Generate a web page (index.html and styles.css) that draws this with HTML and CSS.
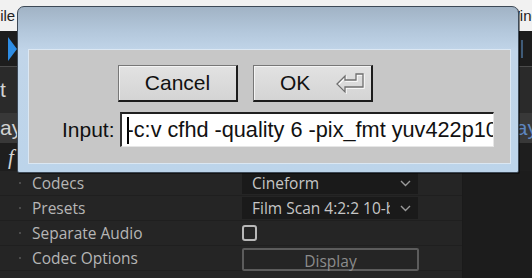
FILE: index.html
```html
<!DOCTYPE html>
<html lang="en">
<head>
  <meta charset="UTF-8" />
  <title>Input</title>
  <link rel="stylesheet" href="styles.css">
</head>
<body>
  <div class="menubar">
    <span class="menu-file">File</span>
    <span class="menu-window">Window</span>
  </div>

  <div class="toolbar">
    <svg class="play" width="9" height="24" viewBox="0 0 9 24"><polygon points="0,0 9,12 0,24" fill="#2e8de4"/></svg>
    <span class="edge-mark"></span>
  </div>
  <div class="layer-row row-b"><span class="peek">t</span></div>
  <div class="layer-row row-c"><span class="peek">ay</span><span class="peek peek-blue">ay</span></div>
  <div class="layer-row row-d"><span class="peek peek-fx">f</span></div>

  <div class="settings">
    <div class="settings-main">
      <div class="setting">
        <span class="dot"></span>
        <span class="label">Codecs</span>
        <div class="select">
          <span class="select-text">Cineform</span>
          <svg class="chevron" width="11" height="7" viewBox="0 0 11 7"><polyline points="1,1 5.5,5.5 10,1" fill="none" stroke="#9a9a9a" stroke-width="1.4"/></svg>
        </div>
      </div>
      <div class="setting">
        <span class="dot"></span>
        <span class="label">Presets</span>
        <div class="select">
          <span class="select-text">Film Scan 4:2:2 10-bit</span>
          <svg class="chevron" width="11" height="7" viewBox="0 0 11 7"><polyline points="1,1 5.5,5.5 10,1" fill="none" stroke="#9a9a9a" stroke-width="1.4"/></svg>
        </div>
      </div>
      <div class="setting">
        <span class="dot"></span>
        <span class="label">Separate Audio</span>
        <span class="checkbox"></span>
      </div>
      <div class="setting">
        <span class="dot"></span>
        <span class="label">Codec Options</span>
        <button class="display-btn">Display</button>
      </div>
    </div>
    <div class="settings-side"></div>
  </div>

  <div class="dialog">
    <div class="dialog-body">
      <div class="buttons">
        <button class="btn">Cancel</button>
        <button class="btn btn-ok">
          <span>OK</span>
          <svg class="enter" width="31" height="21" viewBox="0 0 31 21">
            <polygon points="3,11 11,3 11,7 22,7 22,1 29,1 29,14 11,14 11,19" fill="none" stroke="#ffffff" stroke-width="1.3" transform="translate(1,1)"/>
            <polygon points="3,11 11,3 11,7 22,7 22,1 29,1 29,14 11,14 11,19" fill="none" stroke="#6f6f6f" stroke-width="1.3"/>
          </svg>
        </button>
      </div>
      <div class="input-row">
        <span class="input-label">Input:</span>
        <div class="input"><span class="caret"></span>-c:v cfhd -quality 6 -pix_fmt yuv422p10</div>
      </div>
    </div>
  </div>
</body>
</html>
```

FILE: styles.css
```css
* {
  box-sizing: border-box;
  margin: 0;
  padding: 0;
}

body {
  width: 532px;
  height: 278px;
  overflow: hidden;
  position: relative;
  background: #252525;
  font-family: 'Open Sans', sans-serif;
}

/* host app behind the dialog */
.menubar {
  height: 31px;
  background: #f1f1f1;
  display: flex;
  align-items: center;
  justify-content: space-between;
  font-family: 'Liberation Sans', sans-serif;
  font-size: 15px;
  color: #222;
  overflow: hidden;
}

.menu-file {
  margin-left: -9px;
}

.menu-window {
  margin-right: -27px;
}

.toolbar {
  height: 36px;
  background: #1d1d1d;
  border-bottom: 1px solid #4b4b4b;
  display: flex;
  align-items: center;
  justify-content: space-between;
  padding-left: 8px;
}

.edge-mark {
  width: 2px;
  height: 18px;
  margin-right: 9px;
  background: #3f5b78;
}

.layer-row {
  display: flex;
  align-items: center;
  justify-content: space-between;
  overflow: hidden;
  font-family: 'Liberation Sans', sans-serif;
  font-size: 21px;
  color: #d2d2d2;
}

.row-b {
  height: 46px;
  background: #2a2a2a;
}

.row-c {
  height: 30px;
  background: #383838;
}

.row-d {
  height: 28px;
  background: #1e1e1e;
}

.peek-blue {
  color: #5d86c0;
  margin-right: -6px;
}

.peek-fx {
  margin-left: 8px;
  font-family: 'Liberation Serif', serif;
  font-style: italic;
}

/* settings panel */
.settings {
  display: flex;
  height: 107px;
  overflow: hidden;
}

.settings-main {
  width: 462px;
  background: #252525;
}

.settings-side {
  flex: 1;
  background: #1c1c1c;
  border-left: 1px solid #1a1a1a;
}

.setting {
  height: 25px;
  display: flex;
  align-items: center;
  padding-left: 19px;
  border-bottom: 1px solid #1f1f1f;
}

.dot {
  width: 2px;
  height: 2px;
  background: #4b4b4b;
  margin-right: 11px;
}

.label {
  width: 210px;
  font-size: 15.5px;
  color: #b6b6b6;
}

.select {
  width: 176px;
  height: 22px;
  background: #1a1a1a;
  display: flex;
  align-items: center;
  padding: 0 7px 0 10px;
  font-size: 15.5px;
  color: #c6c6c6;
}

.select-text {
  width: 138px;
  overflow: hidden;
  white-space: nowrap;
}

.chevron {
  margin-left: auto;
}

.checkbox {
  width: 15px;
  height: 16px;
  border: 2px solid #b8b8b8;
  border-radius: 3px;
}

.display-btn {
  width: 177px;
  height: 23px;
  margin-top: 3px;
  background: transparent;
  border: 2px solid #5c5c5c;
  border-radius: 2px;
  font-family: inherit;
  font-size: 15.5px;
  color: #8c8c8c;
}

/* modal input dialog */
.dialog {
  position: absolute;
  left: 17px;
  top: 6px;
  width: 502px;
  height: 167px;
  padding: 43px 8px 9px 11px;
  border: 1px solid #3d4956;
  border-radius: 7px 7px 2px 2px;
  background: linear-gradient(to bottom, #a1b3c5 0, #b3c7db 24px, #c1d5e9 44px, #bcd4ea 100%);
  box-shadow: 1px 1px 0 rgba(0, 0, 0, 0.45);
  font-family: 'Liberation Sans', sans-serif;
  font-size: 21px;
  color: #111;
}

.dialog-body {
  height: 100%;
  background: #c7c7c7;
  box-shadow: 0 0 0 1px rgba(255, 255, 255, 0.45);
  padding-top: 15px;
}

.buttons {
  display: flex;
  gap: 15px;
  padding-left: 89px;
}

.btn {
  width: 120px;
  height: 37px;
  display: flex;
  align-items: center;
  justify-content: center;
  background: linear-gradient(to bottom, #e2e2e2, #d4d4d4);
  border: 1px solid #777;
  border-right: 2px solid #1c1c1c;
  border-bottom: 2px solid #1c1c1c;
  box-shadow: inset 1px 1px 0 #f4f4f4;
  font-family: inherit;
  font-size: 21px;
  color: #111;
}

.btn-ok {
  justify-content: flex-start;
  padding-left: 26px;
}

.enter {
  margin-left: 24px;
}

.input-row {
  display: flex;
  align-items: center;
  margin-top: 10px;
  padding-left: 33px;
}

.input-label {
  margin-right: 5px;
}

.input {
  width: 374px;
  height: 35px;
  display: flex;
  align-items: center;
  padding-left: 5px;
  background: #fff;
  border-top: 2px solid #202020;
  border-left: 2px solid #303030;
  border-right: 1px solid #e6e6e6;
  border-bottom: 1px solid #e6e6e6;
  white-space: nowrap;
  overflow: hidden;
  font-size: 21.7px;
}

.caret {
  width: 2px;
  height: 27px;
  margin-right: -2px;
  background: #000;
  flex-shrink: 0;
}
```
